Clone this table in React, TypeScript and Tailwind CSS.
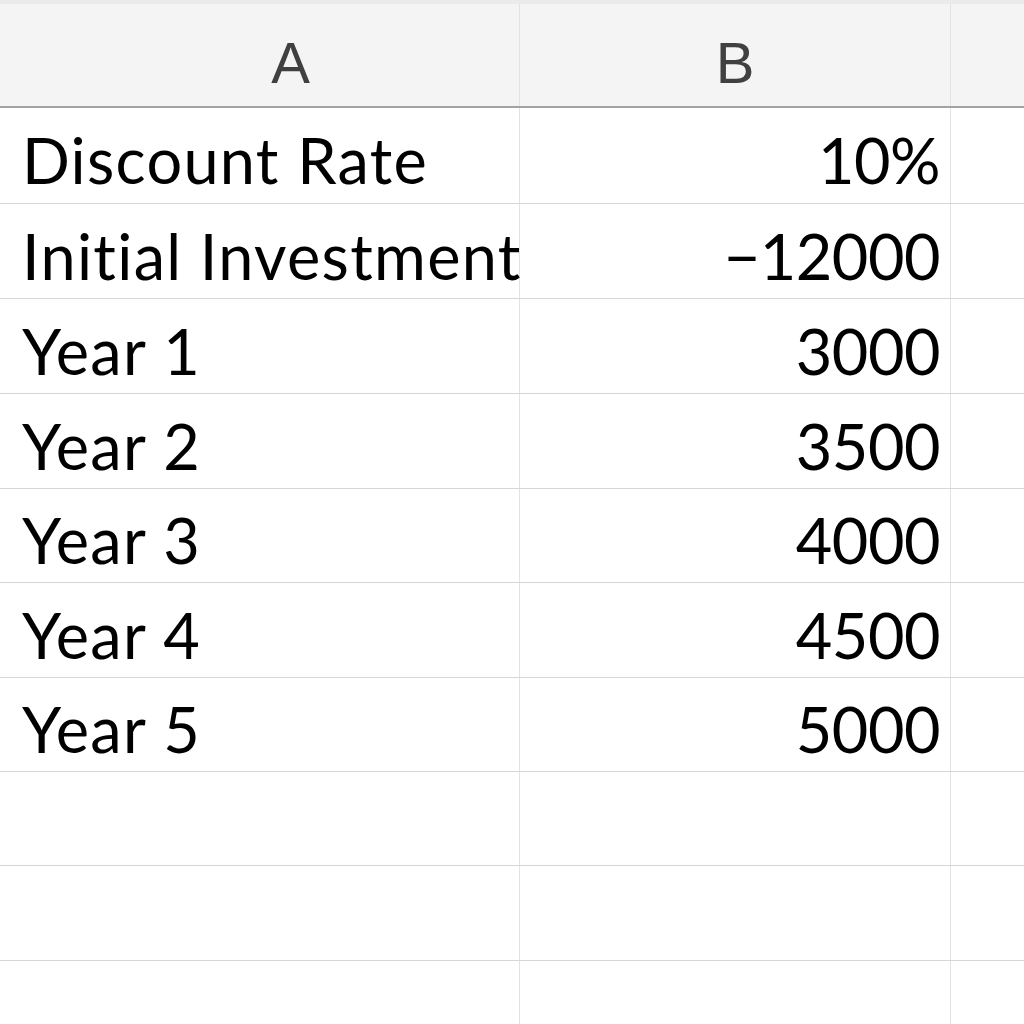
const ROWS: { label: string; value: string; h: number }[] = [
  { label: 'Discount Rate', value: '10%', h: 96 },
  { label: 'Initial Investment', value: '\u221212000', h: 95 },
  { label: 'Year 1', value: '3000', h: 95 },
  { label: 'Year 2', value: '3500', h: 95 },
  { label: 'Year 3', value: '4000', h: 94 },
  { label: 'Year 4', value: '4500', h: 95 },
  { label: 'Year 5', value: '5000', h: 94 },
  { label: '', value: '', h: 94 },
  { label: '', value: '', h: 95 },
  { label: '', value: '', h: 95 },
]

export default function App() {
  return (
    <div className="h-[1024px] w-[1024px] overflow-hidden bg-white font-['Lato',sans-serif] text-black [font-variant-ligatures:none]">
      <div className="h-[4px] bg-[#ebebeb]" />
      {/* column headers */}
      <div className="flex h-[104px] border-b-2 border-[#a3a3a3] bg-[#f4f4f4] text-[#404040]">
        <div className="flex w-[520px] items-center justify-center border-r border-[#e2e2e2] pl-[62px] pt-[14px] text-[58px] font-['Liberation_Sans_Narrow','Liberation_Sans',sans-serif]">
          A
        </div>
        <div className="flex w-[431px] items-center justify-center border-r border-[#e2e2e2] pt-[14px] text-[58px] font-['Liberation_Sans_Narrow','Liberation_Sans',sans-serif]">
          B
        </div>
        <div className="flex-1" />
      </div>
      {ROWS.map((r, i) => (
        <div
          key={i}
          className="flex border-b border-[#d6d6d6]"
          style={{ height: r.h }}
        >
          <div className="flex w-[520px] items-center whitespace-nowrap border-r border-[#e2e2e2] pl-[22px] pt-[8px] text-[63px] leading-none tracking-[1.3px]">
            {r.label}
          </div>
          <div className="flex w-[431px] items-center justify-end border-r border-[#e2e2e2] pr-[10px] pt-[8px] text-[63px] leading-none tracking-[-0.5px]">
            {r.value}
          </div>
          <div className="flex-1" />
        </div>
      ))}
    </div>
  )
}
